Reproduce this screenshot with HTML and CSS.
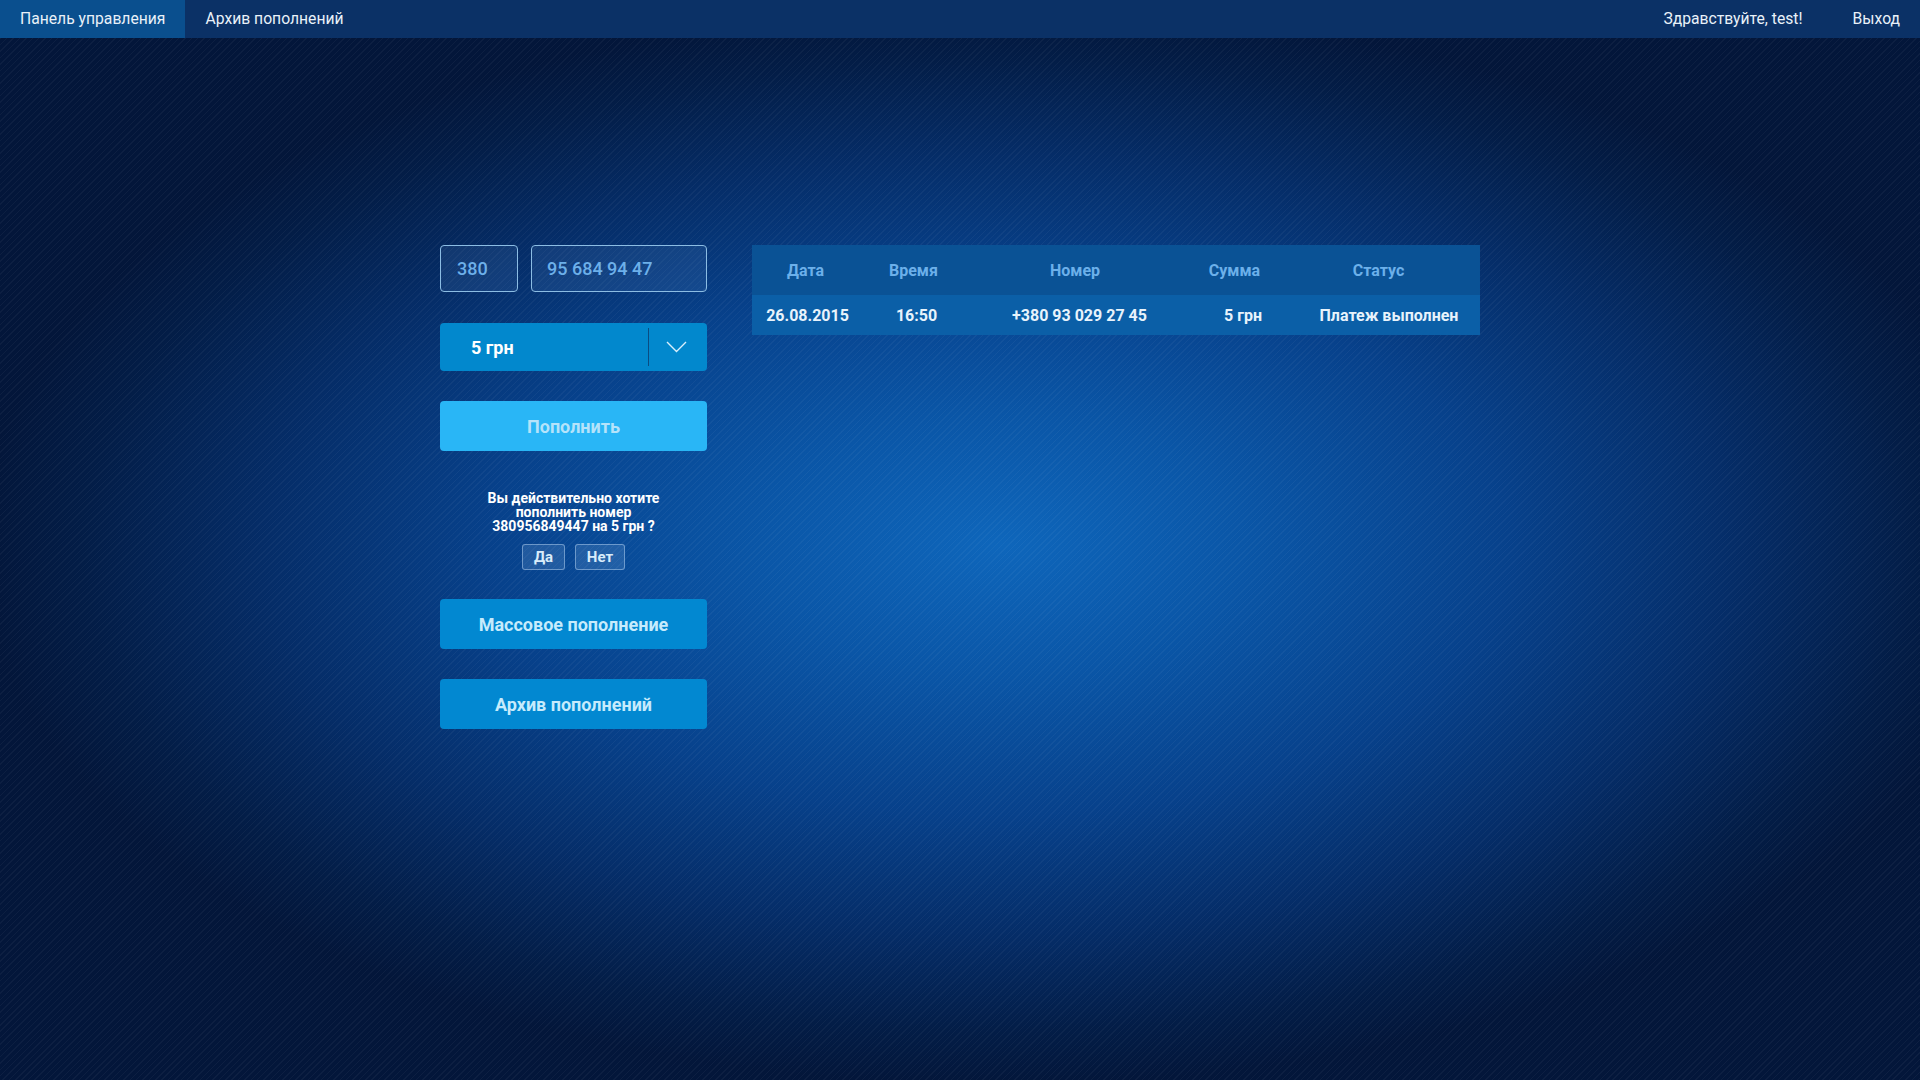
FILE: index.html
```html
<!DOCTYPE html>
<html lang="ru">
<head>
<meta charset="utf-8">
<title>Панель управления</title>
<link rel="stylesheet" href="styles.css">
</head>
<body>
<div class="stripes"></div>
<nav class="topbar">
  <div class="nav-left">
    <a class="nav-item active">Панель управления</a>
    <a class="nav-item">Архив пополнений</a>
  </div>
  <div class="nav-right">
    <span class="nav-item greet">Здравствуйте, test!</span>
    <a class="nav-item">Выход</a>
  </div>
</nav>
<main class="main">
  <section class="form">
    <div class="phone-row">
      <div class="field code">380</div>
      <div class="field number">95 684 94 47</div>
    </div>
    <div class="select">
      <span class="select-label">5 грн</span>
      <span class="select-arrow">
        <svg width="21" height="12" viewBox="0 0 21 12"><polyline points="1,1 10.5,10.5 20,1" fill="none" stroke="#d9effc" stroke-width="1.4"/></svg>
      </span>
    </div>
    <button class="btn btn-primary">Пополнить</button>
    <div class="confirm">
      <p class="confirm-text">Вы действительно хотите<br>пополнить номер<br>380956849447 на 5 грн ?</p>
      <div class="confirm-actions">
        <button class="small-btn yes">Да</button>
        <button class="small-btn no">Нет</button>
      </div>
    </div>
    <button class="btn btn-secondary first">Массовое пополнение</button>
    <button class="btn btn-secondary">Архив пополнений</button>
  </section>
  <section class="history">
    <table class="table">
      <colgroup>
        <col class="c1"><col class="c2"><col class="c3"><col class="c4"><col class="c5">
      </colgroup>
      <thead>
        <tr><th>Дата</th><th>Время</th><th>Номер</th><th>Сумма</th><th>Статус</th></tr>
      </thead>
      <tbody>
        <tr><td>26.08.2015</td><td>16:50</td><td>+380 93 029 27 45</td><td>5 грн</td><td>Платеж выполнен</td></tr>
      </tbody>
    </table>
  </section>
</main>
</body>
</html>
```
FILE: styles.css
```css
* { box-sizing: border-box; }
html, body { margin: 0; padding: 0; }
body {
  min-height: 1080px;
  font-family: Roboto, "Liberation Sans", Arial, sans-serif;
  color: #fff;
  background-color: #03163a;
  background-image: radial-gradient(ellipse 1020px 540px at 1000px 545px, #0e66bb 0%, #0a56a7 24%, #07418b 50%, #052d68 72%, #031d47 90%, #03163a 100%);
  position: relative;
  overflow: hidden;
}
.stripes {
  position: absolute;
  inset: 0;
  pointer-events: none;
  background-image: repeating-linear-gradient(135deg, rgba(255,255,255,0.04) 0 1px, rgba(255,255,255,0) 1px 4.5px);
}
.topbar {
  position: relative;
  height: 38px;
  display: flex;
  justify-content: space-between;
  background: #0b3166;
}
.nav-left, .nav-right { display: flex; }
.nav-item {
  display: block;
  padding: 0 20px;
  line-height: 38px;
  font-size: 15.7px;
  color: #e9f1f9;
}
.nav-item.active { background: #0a4f8e; }
.nav-item.greet { padding-right: 30px; }

.main {
  position: relative;
  display: flex;
  justify-content: center;
  gap: 45px;
  padding-top: 207px;
}
.form {
  width: 267px;
  display: flex;
  flex-direction: column;
}
.phone-row {
  display: flex;
  gap: 13px;
  height: 47px;
}
.field {
  border: 1px solid #8cbde4;
  border-radius: 4px;
  background: rgba(110,160,225,0.13);
  color: #6db0ea;
  font-size: 18px;
  font-weight: 500;
  line-height: 45px;
  padding-left: 16px;
}
.field.code { width: 78px; }
.field.number { flex: 1; padding-left: 15px; }

.select {
  margin-top: 31px;
  height: 48px;
  background: #0288cd;
  border-radius: 4px;
  display: flex;
  align-items: center;
}
.select-label {
  flex: 1;
  padding-left: 31px;
  font-size: 18px;
  font-weight: 700;
  color: #fff;
}
.select-arrow {
  width: 59px;
  height: 38px;
  border-left: 1px solid #0a4c82;
  display: flex;
  align-items: center;
  justify-content: center;
  padding-right: 4px;
}
.select-arrow svg { display: block; }

.btn {
  display: block;
  width: 100%;
  height: 50px;
  border: 0;
  border-radius: 4px;
  font-family: Roboto, "Liberation Sans", Arial, sans-serif;
  font-size: 18px;
  font-weight: 700;
  padding: 0;
}
.btn-primary {
  margin-top: 30px;
  background: #29b6f6;
  color: #b5e3fa;
}
.btn-secondary {
  margin-top: 30px;
  background: #0288d1;
  color: #c6ebfc;
}
.btn-secondary.first { margin-top: 29px; }
.confirm {
  margin-top: 40px;
  display: flex;
  flex-direction: column;
  align-items: center;
}
.confirm-text {
  margin: 0;
  font-size: 14px;
  font-weight: 700;
  line-height: 14px;
  text-align: center;
  color: #fff;
}
.confirm-actions {
  margin-top: 11px;
  display: flex;
  gap: 10px;
}
.small-btn {
  height: 26px;
  border: 1px solid rgba(200,225,250,0.45);
  border-radius: 3px;
  background: rgba(170,205,245,0.16);
  color: #d8ecfa;
  font-family: Roboto, "Liberation Sans", Arial, sans-serif;
  font-size: 15px;
  font-weight: 700;
  padding: 0;
}
.small-btn.yes { width: 43px; }
.small-btn.no { width: 50px; }

.history { width: 728px; }
.table {
  width: 728px;
  border-collapse: collapse;
  table-layout: fixed;
}
.c1 { width: 110px; }
.c2 { width: 106px; }
.c3 { width: 218px; }
.c4 { width: 104px; }
.c5 { width: 190px; }
.table th {
  height: 50px;
  background: #0a5295;
  color: #6cb0ea;
  font-size: 16px;
  font-weight: 700;
  text-align: center;
  padding: 0;
}
.table td {
  height: 40px;
  background: #0b5fa7;
  color: #e8f3fc;
  font-size: 16px;
  font-weight: 700;
  text-align: center;
  padding: 0;
}
.table th:nth-child(1) { padding-right: 3px; }
.table th:nth-child(2) { padding-right: 3px; }
.table th:nth-child(3) { padding-right: 4px; }
.table th:nth-child(4) { padding-right: 7px; }
.table th:nth-child(5) { padding-right: 13px; }
.table td:nth-child(1) { padding-left: 1px; }
.table td:nth-child(2) { padding-left: 3px; }
.table td:nth-child(3) { padding-left: 5px; }
.table td:nth-child(4) { padding-left: 10px; }
.table td:nth-child(5) { padding-left: 8px; }
```
